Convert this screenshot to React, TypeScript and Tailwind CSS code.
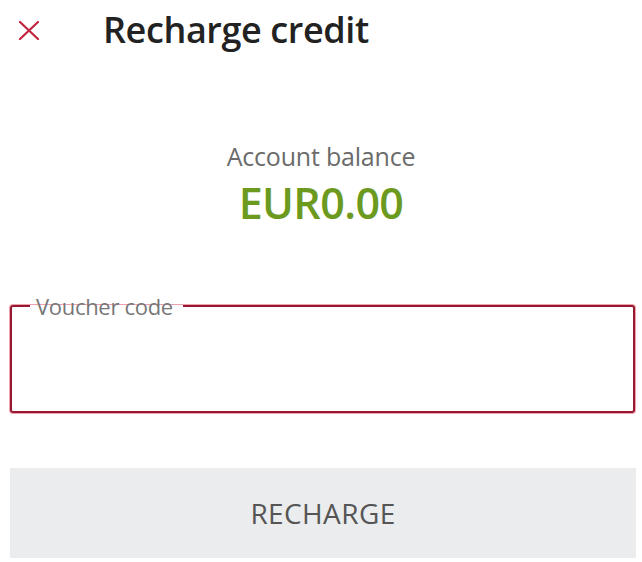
import React from "react";

export default function App() {
  return (
    <div className="w-[642px] h-[562px] bg-white relative overflow-hidden" style={{ fontFamily: '"Open Sans", "Noto Sans", sans-serif' }}>
      <div className="flex items-center h-[60px] pl-[18px]">
        <svg width="22" height="19" viewBox="0 0 22 19" className="shrink-0">
          <path d="M2 1 L20 18 M20 1 L2 18" stroke="#c2233f" strokeWidth="2.2" strokeLinecap="round" />
        </svg>
        <h1 className="ml-[63px] text-[36px] leading-none font-semibold text-[#222] tracking-[-0.4px]">Recharge credit</h1>
      </div>
      <div className="flex flex-col items-center mt-[82px]">
        <div className="text-[25px] leading-[28px] text-[#6b6b6b] tracking-[-0.2px]">Account balance</div>
        <div className="text-[43px] leading-[46px] font-semibold text-[#6c9a1f] mt-[10px] tracking-[-0.6px]">EUR0.00</div>
      </div>
      <fieldset className="ml-[10px] mt-[69px] w-[625px] h-[118px] border-2 border-[#95192f] rounded-[3px] shadow-[0_0_0_1px_#f0a0b0] px-[16px]">
        <legend className="pl-[6px] pr-[10px] text-[22px] leading-[22px] text-[#777] ml-[2px] tracking-[-0.3px]">Voucher code</legend>
      </fieldset>
      <button className="block mx-[10px] mt-[55px] w-[626px] h-[90px] bg-[#ebeced] text-[28px] text-[#555] tracking-[0.4px]">RECHARGE</button>
    </div>
  );
}
